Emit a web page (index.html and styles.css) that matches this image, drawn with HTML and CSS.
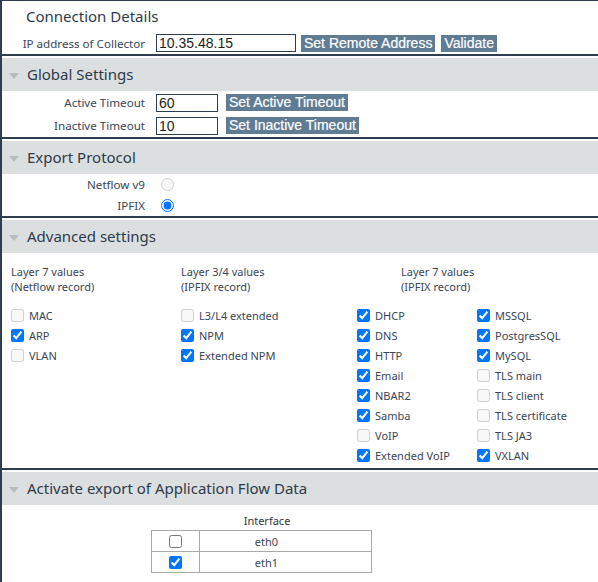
FILE: index.html
```html
<!DOCTYPE html>
<html lang="en">
    <head>
        <title>Flow Export</title>
        <link rel="stylesheet" href="styles.css">
    </head>
    <body>
        <div class="Page">
            <div class="Section First">
                <div class="Title">Connection Details</div>
                <div class="Row">
                    <label class="Label">IP address of Collector</label>
                    <input class="Field Wide" type="text" value="10.35.48.15">
                    <button class="Btn Gap5">Set Remote Address</button>
                    <button class="Btn Gap6">Validate</button>
                </div>
            </div>

            <div class="Section">
                <div class="Header"><span class="Arrow"></span>Global Settings</div>
                <div class="Row Timeout">
                    <label class="Label">Active Timeout</label>
                    <input class="Field Small" type="text" value="60">
                    <button class="Btn Gap8">Set Active Timeout</button>
                </div>
                <div class="Row Timeout">
                    <label class="Label">Inactive Timeout</label>
                    <input class="Field Small" type="text" value="10">
                    <button class="Btn Gap8">Set Inactive Timeout</button>
                </div>
            </div>

            <div class="Section">
                <div class="Header"><span class="Arrow"></span>Export Protocol</div>
                <div class="Row Radio">
                    <label class="Label">Netflow v9</label>
                    <input type="radio" name="proto" disabled>
                </div>
                <div class="Row Radio">
                    <label class="Label">IPFIX</label>
                    <input type="radio" name="proto" checked>
                </div>
            </div>

            <div class="Section">
                <div class="Header"><span class="Arrow"></span>Advanced settings</div>
                <div class="Advanced">
                    <div class="Col">
                        <div class="ColHead">Layer 7 values<br>(Netflow record)</div>
                        <label class="Check"><input type="checkbox" disabled>MAC</label>
                        <label class="Check"><input type="checkbox" checked>ARP</label>
                        <label class="Check"><input type="checkbox" disabled>VLAN</label>
                    </div>
                    <div class="Col Col2">
                        <div class="ColHead">Layer 3/4 values<br>(IPFIX record)</div>
                        <label class="Check"><input type="checkbox" disabled>L3/L4 extended</label>
                        <label class="Check"><input type="checkbox" checked>NPM</label>
                        <label class="Check"><input type="checkbox" checked>Extended NPM</label>
                    </div>
                    <div class="Col Col3">
                        <div class="ColHead Shift">Layer 7 values<br>(IPFIX record)</div>
                        <div class="Pair">
                            <div class="Sub">
                                <label class="Check"><input type="checkbox" checked>DHCP</label>
                                <label class="Check"><input type="checkbox" checked>DNS</label>
                                <label class="Check"><input type="checkbox" checked>HTTP</label>
                                <label class="Check"><input type="checkbox" checked>Email</label>
                                <label class="Check"><input type="checkbox" checked>NBAR2</label>
                                <label class="Check"><input type="checkbox" checked>Samba</label>
                                <label class="Check"><input type="checkbox" disabled>VoIP</label>
                                <label class="Check"><input type="checkbox" checked>Extended VoIP</label>
                            </div>
                            <div class="Sub">
                                <label class="Check"><input type="checkbox" checked>MSSQL</label>
                                <label class="Check"><input type="checkbox" checked>PostgresSQL</label>
                                <label class="Check"><input type="checkbox" checked>MySQL</label>
                                <label class="Check"><input type="checkbox" disabled>TLS main</label>
                                <label class="Check"><input type="checkbox" disabled>TLS client</label>
                                <label class="Check"><input type="checkbox" disabled>TLS certificate</label>
                                <label class="Check"><input type="checkbox" disabled>TLS JA3</label>
                                <label class="Check"><input type="checkbox" checked>VXLAN</label>
                            </div>
                        </div>
                    </div>
                </div>
            </div>

            <div class="Section">
                <div class="Header"><span class="Arrow"></span>Activate export of Application Flow Data</div>
                <div class="IfaceWrap">
                    <div class="IfaceHead">Interface</div>
                    <table class="Iface">
                        <tr>
                            <td class="Box"><input type="checkbox"></td>
                            <td class="Name">eth0</td>
                        </tr>
                        <tr>
                            <td class="Box"><input type="checkbox" checked></td>
                            <td class="Name">eth1</td>
                        </tr>
                    </table>
                </div>
            </div>
        </div>
    </body>
</html>
```

FILE: styles.css
```css
body{
    margin: 0;
    font-family: "Noto Sans", "Open Sans", sans-serif;
    color: #3a4555;
    background: white;
}

.Page{
    border-left: 2px solid #2e3e4f;
    border-top: 1px solid #2e3e4f;
    min-height: 600px;
}

.Section{
    border-top: 2px solid #2e3e4f;
    padding-top: 2px;
}

.Section.First{
    border-top: none;
    padding-top: 0;
}

.Title{
    height: 31px;
    line-height: 31px;
    padding-left: 24px;
    font-size: 15px;
    color: #2e3a4b;
}

.Header{
    background: #dcdfe0;
    height: 33px;
    line-height: 33px;
    padding-left: 7px;
    font-size: 15px;
    color: #2e3a4b;
    display: flex;
    align-items: center;
}

.Arrow{
    width: 0;
    height: 0;
    border-left: 5px solid transparent;
    border-right: 5px solid transparent;
    border-top: 6px solid #b9bdc1;
    margin-right: 8px;
    margin-top: 3px;
}

.Row{
    display: flex;
    align-items: center;
    height: 22px;
}

.Timeout{
    height: 23px;
}

.Radio{
    height: 21px;
}

.Label{
    width: 143px;
    text-align: right;
    font-size: 11.6px;
    flex-shrink: 0;
}

.Field{
    margin-left: 11px;
    height: 18px;
    box-sizing: border-box;
    border: 1px solid #2e3e4f;
    font-family: "Liberation Sans", Arial, sans-serif;
    font-size: 14px;
    color: #1d1d1d;
    padding: 0 2px;
    outline: none;
}

.Wide{
    width: 140px;
}

.Small{
    width: 62px;
}

.Btn{
    background: #5f7c93;
    color: white;
    border: none;
    font-family: "Liberation Sans", Arial, sans-serif;
    font-size: 14px;
    height: 17px;
    line-height: 17px;
    padding: 0 3px;
    -webkit-text-stroke: 0.2px white;
}

.Gap5{ margin-left: 5px; }
.Gap6{ margin-left: 6px; }
.Gap8{ margin-left: 8px; }

.Radio input{
    margin: 0 0 0 16px;
    width: 13px;
    height: 13px;
}

.Advanced{
    display: flex;
    padding: 11px 0 0 9px;
    height: 215px;
    box-sizing: border-box;
}

.Col{
    width: 170px;
}

.Col2{
    width: 176px;
}

.Col3{
    flex: 1;
}

.ColHead{
    font-size: 11px;
    line-height: 15px;
    height: 41px;
}

.Shift{
    padding-left: 44px;
}

.Pair{
    display: flex;
}

.Sub{
    width: 120px;
}

.Check{
    display: flex;
    align-items: center;
    height: 20px;
    font-size: 11px;
}

.Check input{
    margin: 0 5px 0 0;
    width: 13px;
    height: 13px;
}

.IfaceWrap{
    padding: 8px 0 0 149px;
}

.IfaceHead{
    width: 232px;
    text-align: center;
    font-size: 11px;
    height: 17px;
    color: #333;
}

.Iface{
    border-collapse: collapse;
    width: 221px;
}

.Iface td{
    border: 1px solid #a9a9a9;
    height: 20px;
    padding: 0;
    font-size: 11px;
}

.Box{
    width: 47px;
    text-align: center;
}

.Box input{
    margin: 3px 0 0 0;
    width: 13px;
    height: 13px;
}

.Name{
    text-align: center;
    padding-right: 38px !important;
}
```
